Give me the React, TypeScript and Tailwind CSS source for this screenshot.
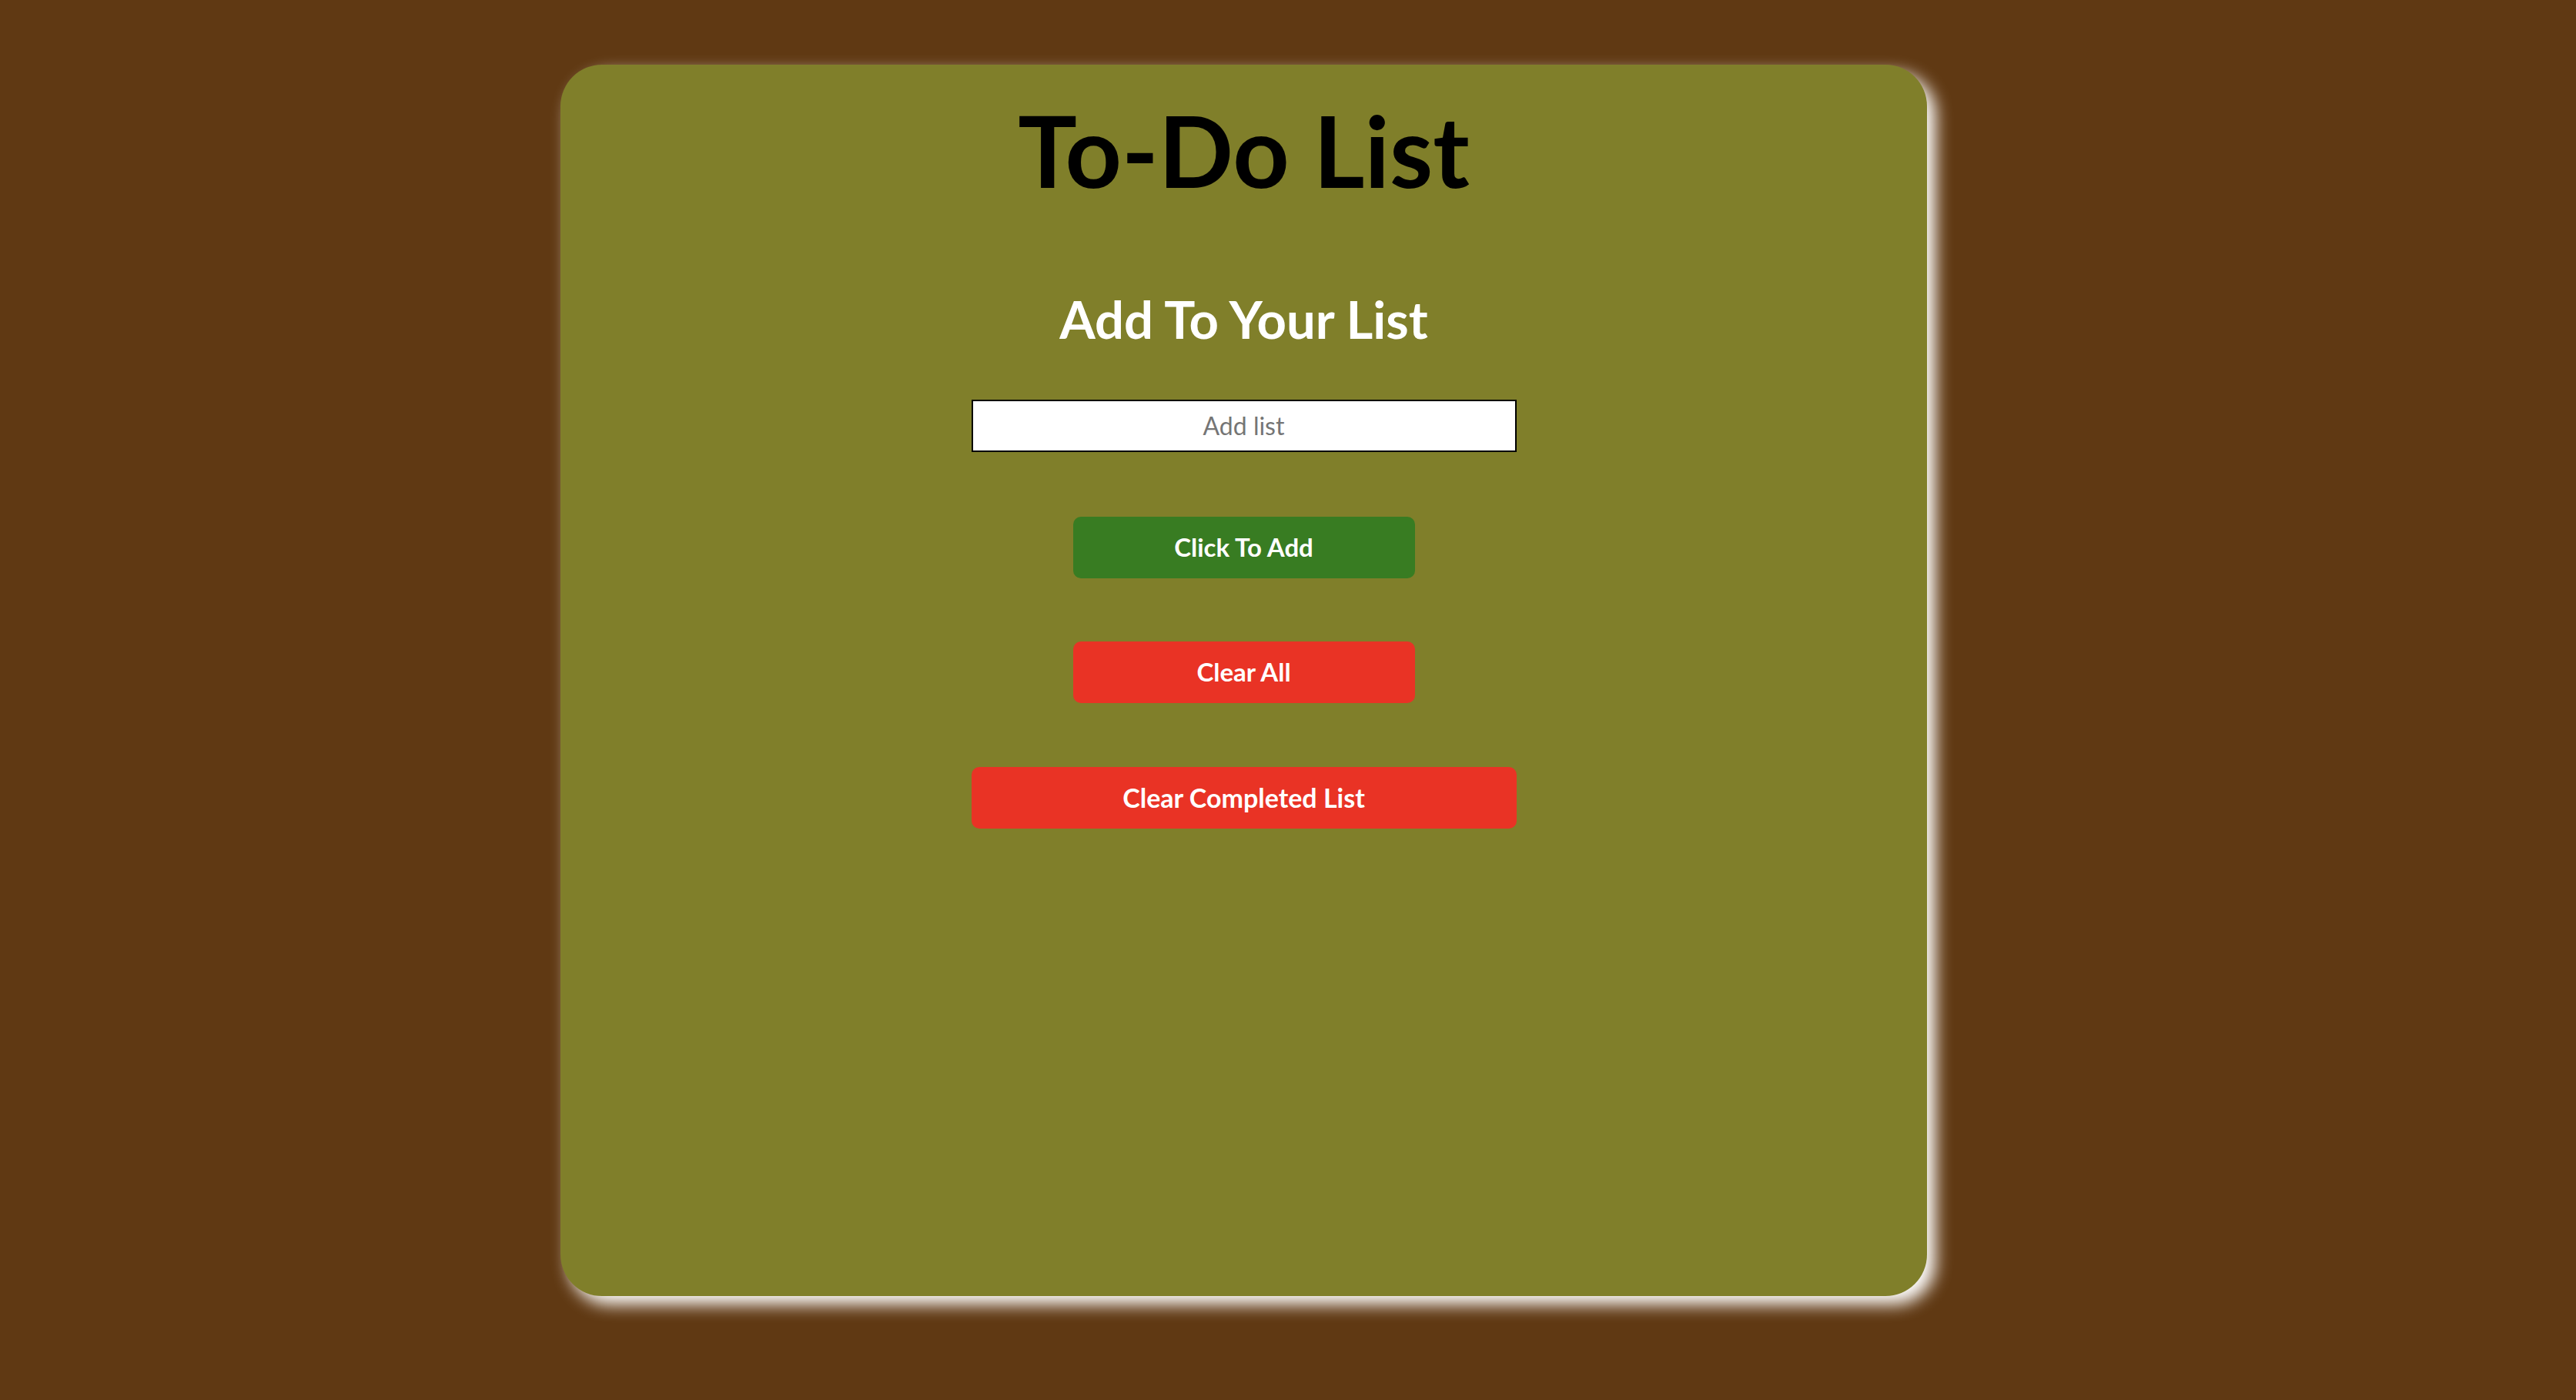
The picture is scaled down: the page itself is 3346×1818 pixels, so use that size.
import React from "react";

const font = { fontFamily: "Lato, 'Open Sans', sans-serif" };

export default function App() {
  return (
    <div className="min-h-[1818px] w-full bg-[#603913] pt-[84px]" style={font}>
      <div className="ml-[728px] flex h-[1599px] w-[1775px] flex-col items-center rounded-[54px] bg-[#807f2a] pt-[34px] shadow-[11px_11px_21px_#ffffff]">
        <h1 className="text-[128px] font-bold leading-[1.2] text-black">To-Do List</h1>

        <h2 className="mt-[102px] text-[67px] font-bold leading-[1.2] text-white">Add To Your List</h2>

        <input
          type="text"
          placeholder="Add list"
          className="mt-[65px] h-[68px] w-[708px] border-2 border-black bg-white text-center text-[32px] text-black outline-none placeholder:text-[#757575]"
        />

        <button className="mt-[84px] h-[80px] w-[444px] rounded-[10px] bg-[#387c22] text-[33px] font-bold text-white">
          Click To Add
        </button>

        <button className="mt-[82px] h-[80px] w-[444px] rounded-[10px] bg-[#e93325] text-[33px] font-bold text-white">
          Clear All
        </button>

        <button className="mt-[83px] h-[80px] w-[708px] rounded-[10px] bg-[#e93325] text-[34px] font-bold text-white">
          Clear Completed List
        </button>
      </div>
    </div>
  );
}
